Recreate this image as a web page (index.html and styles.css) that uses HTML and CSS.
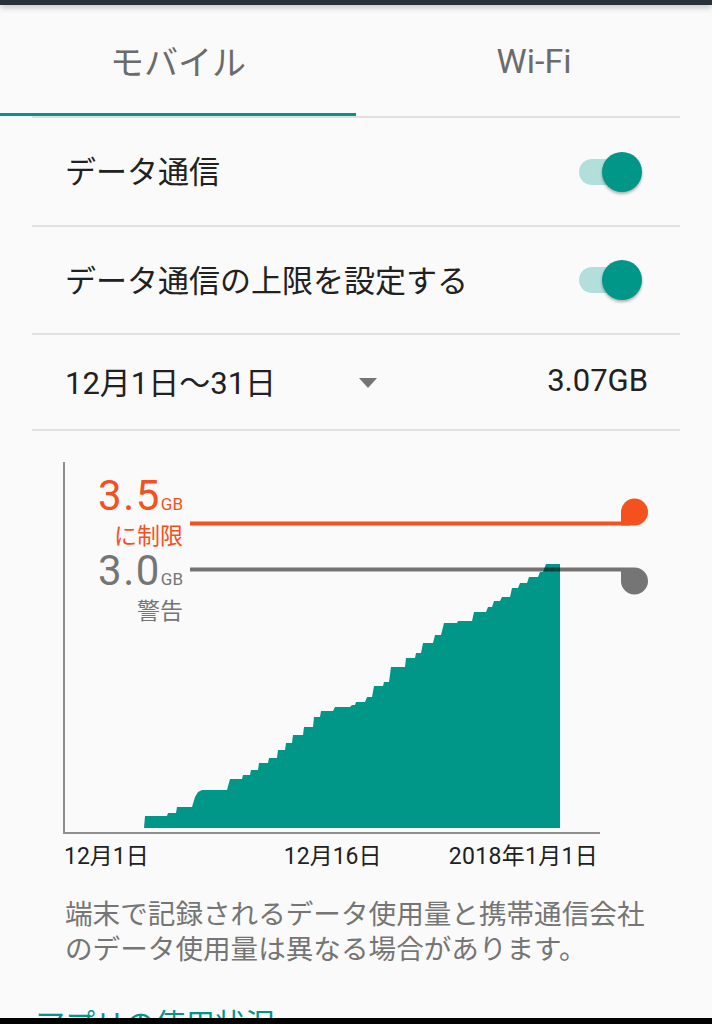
FILE: index.html
```html
<!DOCTYPE html>
<html lang="ja">
<head>
<meta charset="utf-8">
<title>データ使用量</title>
<link rel="stylesheet" href="styles.css">
</head>
<body>
<div class="statusbar"></div>
<div class="tabs">
  <div class="tab active">モバイル</div>
  <div class="tab">Wi-Fi</div>
</div>
<div class="tab-divider"></div>
<div class="list">
  <div class="row row-1">
    <span class="row-text">データ通信</span>
    <span class="switch"><span class="track"></span><span class="thumb"></span></span>
  </div>
  <div class="sep"></div>
  <div class="row row-2">
    <span class="row-text">データ通信の上限を設定する</span>
    <span class="switch"><span class="track"></span><span class="thumb"></span></span>
  </div>
  <div class="sep"></div>
  <div class="row row-3">
    <span class="row-text date">12月1日〜31日</span>
    <span class="caret"></span>
    <span class="row-text total">3.07GB</span>
  </div>
  <div class="sep"></div>
</div>
<div class="chart">
  <svg class="chart-svg" width="712" height="405" viewBox="0 431 712 405" xmlns="http://www.w3.org/2000/svg">
    <rect x="63" y="462" width="2" height="372" fill="#8e8e8e"/>
    <rect x="63" y="832" width="537" height="2" fill="#8e8e8e"/>
    <polygon fill="#009688" points="144,828 145,816 167,816 168,813 176,813 177,807 192,807 195,797 198,792 202,790 227,790 230,779 242,779 243,775 250,775 251,770 258,770 259,763 268,763 269,758 277,758 278,750 285,750 286,743 292,743 293,735 303,735 304,727 313,727 314,717 320,717 321,711 333,711 335,707 350,707 352,705 355,705 356,702 365,702 367,697 372,697 374,686 383,686 384,682 389,682 391,667 405,667 406,658 415,658 416,653 421,653 423,643 433,643 435,635 441,635 444,623 457,623 458,621 472,621 474,612 486,612 488,607 492,607 494,601 500,601 502,597 510,597 512,588 518,588 520,583 527,583 529,577 538,577 540,572 543,572 546,564 560,564 560,828"/>
    <rect x="190" y="521.5" width="440" height="4" fill="#f4511e"/>
    <path d="M621,512 A13.5,13.5 0 1 1 634.5,525.5 L621,525.5 Z" fill="#f4511e"/>
    <rect x="190" y="567.5" width="431" height="4" fill="rgba(0,0,0,0.54)"/>
    <path d="M621,567.5 L634.5,567.5 A13.5,13.5 0 1 1 621,581 Z" fill="#757575"/>
  </svg>
  <div class="mark mark-limit">
    <div class="mark-val">3.5<span class="mark-unit">GB</span></div>
    <div class="mark-cap">に制限</div>
  </div>
  <div class="mark mark-warn">
    <div class="mark-val">3.0<span class="mark-unit">GB</span></div>
    <div class="mark-cap">警告</div>
  </div>
</div>
<div class="axis-labels">
  <span class="axis-label">12月1日</span>
  <span class="axis-label mid">12月16日</span>
  <span class="axis-label end">2018年1月1日</span>
</div>
<p class="note">端末で記録されるデータ使用量と携帯通信会社<br>のデータ使用量は異なる場合があります。</p>
<div class="section-title">アプリの使用状況</div>
<div class="navbar"></div>
</body>
</html>
```
FILE: styles.css
```css
html, body {
  margin: 0;
  padding: 0;
}
body {
  background: #fafafa;
  font-family: "Roboto", "Noto Sans CJK JP", sans-serif;
  color: #212121;
  width: 712px;
  height: 1024px;
  overflow: hidden;
  position: relative;
}
.statusbar {
  height: 5px;
  background: #263238;
  box-shadow: 0 2px 6px rgba(0, 0, 0, 0.28);
  position: relative;
  z-index: 2;
}
.tabs {
  display: flex;
  height: 111px;
}
.tab {
  flex: 1;
  display: flex;
  align-items: center;
  justify-content: center;
  font-size: 34px;
  color: #6b6b6b;
  box-sizing: border-box;
  padding-top: 3px;
  border-bottom: 3px solid transparent;
}
.tab.active {
  border-bottom-color: #009688;
}
.tab-divider {
  height: 2px;
  margin: 0 32px;
  background: #e0e0e0;
}
.list {
  margin: 0 32px;
}
.sep {
  height: 2px;
  background: #e0e0e0;
}
.row {
  display: flex;
  align-items: center;
  padding: 0 38px 0 33px;
  box-sizing: border-box;
}
.row-1 { height: 107px; }
.row-2 { height: 106px; }
.row-3 { height: 94px; padding-right: 32px; }
.row-text {
  font-size: 31px;
  color: #212121;
  margin-bottom: 4px;
}
.date {
  width: 294px;
}
.caret {
  width: 0;
  height: 0;
  border-left: 9.5px solid transparent;
  border-right: 9.5px solid transparent;
  border-top: 10px solid #757575;
  margin-top: 2px;
}
.total {
  margin-left: auto;
}
.switch {
  margin-left: auto;
  position: relative;
  width: 63px;
  height: 40px;
  display: block;
}
.track {
  position: absolute;
  left: 0;
  top: 7px;
  width: 58px;
  height: 26px;
  border-radius: 13px;
  background: #b2dfdb;
}
.thumb {
  position: absolute;
  right: 0;
  top: 0;
  width: 40px;
  height: 40px;
  border-radius: 50%;
  background: #009688;
  box-shadow: 0 2px 3px rgba(0, 0, 0, 0.3);
}
.chart {
  position: relative;
  height: 405px;
}
.chart-svg {
  display: block;
}
.mark {
  position: absolute;
  right: 529px;
  text-align: right;
  white-space: nowrap;
}
.mark-limit {
  top: 44px;
  color: #f4511e;
}
.mark-warn {
  top: 119px;
  color: #757575;
}
.mark-val {
  font-size: 42px;
  line-height: 42px;
  letter-spacing: 1.5px;
}
.mark-unit {
  font-size: 17px;
  letter-spacing: 0;
  margin-left: 0;
}
.mark-cap {
  font-size: 23px;
  line-height: 26px;
  margin-top: -1px;
}
.axis-labels {
  display: flex;
  padding: 0 114px 0 64px;
  height: 36px;
  align-items: center;
}
.axis-label {
  font-size: 23px;
  color: #212121;
}
.axis-label.mid {
  margin-left: 135px;
}
.axis-label.end {
  margin-left: auto;
  letter-spacing: 0.3px;
}
.note {
  margin: 25px 0 0 0;
  padding-left: 65px;
  font-size: 27.6px;
  line-height: 35px;
  color: #757575;
}
.section-title {
  margin-top: 38px;
  padding-left: 35px;
  font-size: 30px;
  line-height: 40px;
  color: #009688;
}
.navbar {
  position: absolute;
  left: 0;
  bottom: 0;
  width: 712px;
  height: 6px;
  background: #000;
}
```
